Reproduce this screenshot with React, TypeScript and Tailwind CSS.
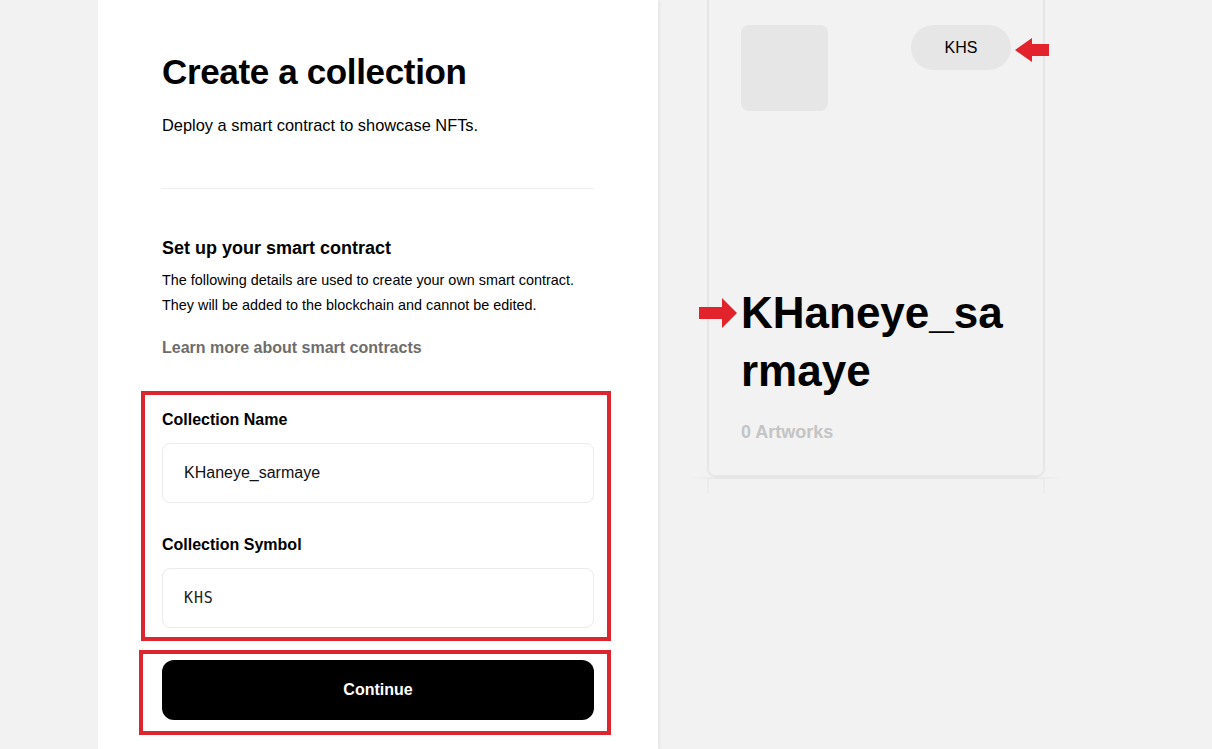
export default function App() {
  return (
    <div className="flex h-[749px] w-full overflow-hidden bg-[#f2f2f2] font-['Liberation_Sans',Arial,sans-serif] text-black">
      {/* left gutter */}
      <div className="w-[98px] shrink-0" />

      {/* Form panel */}
      <section className="w-[560px] shrink-0 bg-white px-[64px] pt-[50px] shadow-[2px_0_3px_rgba(0,0,0,0.05)]">
        <h1 className="text-[35px] leading-[44px] font-bold tracking-[-0.01em]">Create a collection</h1>
        <p className="mt-[19px] text-[16.4px] leading-[24px]">Deploy a smart contract to showcase NFTs.</p>

        <div className="mt-[51px] h-px bg-[#efefef]" />

        <h2 className="mt-[46px] text-[18px] leading-[26px] font-bold">Set up your smart contract</h2>
        <p className="mt-[7px] text-[14.4px] leading-[25px]">
          The following details are used to create your own smart contract.
          <br />
          They will be added to the blockchain and cannot be edited.
        </p>
        <a className="mt-[18px] block text-[16px] leading-[24px] font-bold text-[#6d6d6d]">Learn more about smart contracts</a>

        {/* highlighted fields */}
        <div className="mt-[31px] -ml-[21px] -mr-[17px] border-4 border-[#dd2530] pl-[17px] pr-[13px] pt-[14px] pb-[9px]">
          <label className="block text-[16px] leading-[22px] font-bold">Collection Name</label>
          <div className="mt-[12px] flex h-[60px] items-center rounded-[8px] border border-[#ebebeb] px-[21px] text-[16px] text-[#111]">
            KHaneye_sarmaye
          </div>

          <label className="mt-[31px] block text-[16px] leading-[22px] font-bold">Collection Symbol</label>
          <div className="mt-[12px] flex h-[60px] items-center rounded-[8px] border border-[#ebebeb] px-[21px] font-['DejaVu_Sans_Mono',monospace] text-[15px] tracking-[0.06em] text-[#222]">
            KHS
          </div>
        </div>

        <div className="mt-[9px] -ml-[23px] -mr-[17px] border-4 border-[#dd2530] pl-[19px] pr-[13px] pt-[6px] pb-[11px]">
          <button className="flex h-[60px] w-full items-center justify-center rounded-[12px] bg-black text-[16px] font-bold text-white">
            Continue
          </button>
        </div>
      </section>

      {/* Preview */}
      <aside className="ml-[49px] w-[338px] shrink-0">
        <div className="rounded-b-[8px] border-2 border-t-0 border-[#e6e6e6] px-[32px] pt-[25px] pb-[31px]">
          <div className="flex items-start justify-between">
            <div className="h-[86px] w-[87px] rounded-[8px] bg-[#e6e6e6]" />
            <div className="relative flex h-[45px] w-[100px] items-center justify-center rounded-full bg-[#e6e6e6] text-[16px]">
              KHS
              <svg className="absolute left-[104px] top-[13px]" width="34" height="24" viewBox="0 0 34 24">
                <polygon points="0,12 17,0 17,6 34,6 34,18 17,18 17,24" fill="#e3232b" />
              </svg>
            </div>
          </div>

          <h3 className="relative mt-[173px] break-all text-[44px] leading-[58px] font-bold">
            <svg className="absolute -left-[42px] top-[14px]" width="38" height="30" viewBox="0 0 38 30">
              <polygon points="0,9 23,9 23,0 38,15 23,30 23,21 0,21" fill="#e3232b" />
            </svg>
            KHaneye_sarmaye
          </h3>
          <p className="mt-[20px] text-[18px] leading-[24px] font-bold text-[#c4c4c4]">0 Artworks</p>
        </div>
        <div className="-mx-[18px] h-[2px] bg-[linear-gradient(90deg,transparent,#e6e6e6_8%,#e6e6e6_92%,transparent)]" />
        <div className="h-[14px] border-x-2 border-[#ececec] opacity-70" />
      </aside>
    </div>
  );
}
